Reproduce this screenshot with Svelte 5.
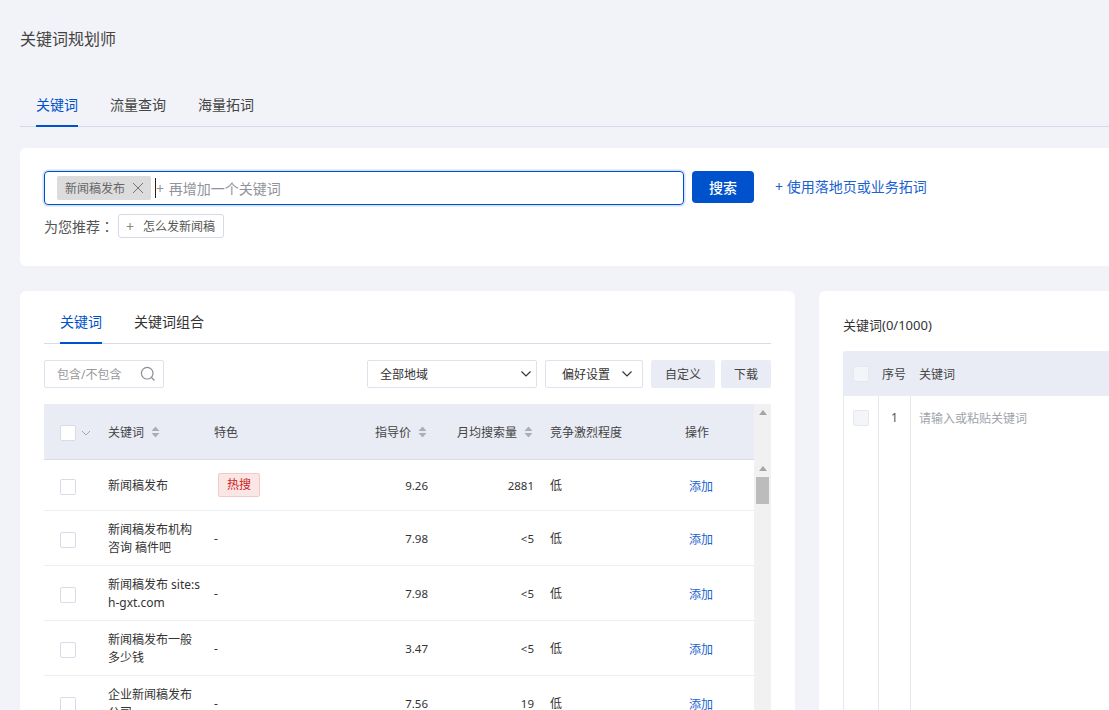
<script>
	const rows = [
		{ kw: '新闻稿发布', hot: true, price: '9.26', vol: '2881', h: 51 },
		{ kw: '新闻稿发布机构咨询 稿件吧', price: '7.98', vol: '<5', h: 55 },
		{ kw: '新闻稿发布 site:sh-gxt.com', price: '7.98', vol: '<5', h: 55 },
		{ kw: '新闻稿发布一般多少钱', price: '3.47', vol: '<5', h: 55 },
		{ kw: '企业新闻稿发布公司', price: '7.56', vol: '19', h: 55 }
	];
</script>

<div class="page">
	<h1 class="title">关键词规划师</h1>

	<nav class="main-tabs">
		<span class="main-tab active">关键词</span>
		<span class="main-tab">流量查询</span>
		<span class="main-tab">海量拓词</span>
	</nav>

	<section class="search-card">
		<div class="search-row">
			<div class="search-input">
				<span class="tag">新闻稿发布
					<svg width="12" height="12" viewBox="0 0 12 12"><path d="M1 1l10 10M11 1L1 11" stroke="#777" fill="none" /></svg>
				</span>
				<span class="caret"></span>
				<span class="placeholder">+ 再增加一个关键词</span>
			</div>
			<button class="search-btn">搜索</button>
			<span class="expand-link">+ 使用落地页或业务拓词</span>
		</div>
		<div class="suggest">
			<span>为您推荐<span class="colon">：</span></span>
			<span class="chip"><span class="chip-plus">+</span>怎么发新闻稿</span>
		</div>
	</section>

	<div class="columns">
		<section class="left-card">
			<div class="sub-tabs">
				<span class="sub-tab active">关键词</span>
				<span class="sub-tab">关键词组合</span>
			</div>

			<div class="toolbar">
				<div class="filter-box">
					<span>包含/不包含</span>
					<svg width="16" height="16" viewBox="0 0 16 16"><circle cx="7.2" cy="7.2" r="5.8" stroke="#8a8f99" stroke-width="1.2" fill="none" /><path d="M11.5 11.5l3 3" stroke="#8a8f99" stroke-width="1.2" /></svg>
				</div>
				<div class="select region">全部地域
					<svg width="12" height="8" viewBox="0 0 12 8"><path d="M1.5 1.5L6 6l4.5-4.5" stroke="#333" stroke-width="1.2" fill="none" /></svg>
				</div>
				<div class="select prefs">偏好设置
					<svg width="12" height="8" viewBox="0 0 12 8"><path d="M1.5 1.5L6 6l4.5-4.5" stroke="#333" stroke-width="1.2" fill="none" /></svg>
				</div>
				<button class="tool-btn custom">自定义</button>
				<button class="tool-btn download">下载</button>
			</div>

			<div class="table">
				<div class="table-main">
					<div class="grid head">
						<div class="check-cell">
							<span class="checkbox"></span>
							<svg width="10" height="6" viewBox="0 0 10 6"><path d="M1 1l4 4 4-4" stroke="#a3a8b3" fill="none" /></svg>
						</div>
						<div class="sortable">关键词 {@render sortIcon()}</div>
						<div>特色</div>
						<div class="num sortable">指导价 {@render sortIcon()}</div>
						<div class="num sortable">月均搜索量 {@render sortIcon()}</div>
						<div></div>
						<div>竞争激烈程度</div>
						<div>操作</div>
					</div>
					{#each rows as row}
						<div class="grid row" style="height: {row.h}px">
							<div class="check-cell"><span class="checkbox"></span></div>
							<div class="kw">{row.kw}</div>
							<div>
								{#if row.hot}<span class="hot">热搜</span>{:else}-{/if}
							</div>
							<div class="num">{row.price}</div>
							<div class="num">{row.vol}</div>
							<div></div>
							<div>低</div>
							<div class="add">添加</div>
						</div>
					{/each}
				</div>
				<div class="scrollbar">
					<div class="scroll-head"><span class="arrow"></span></div>
					<div class="scroll-body">
						<span class="arrow"></span>
						<span class="thumb"></span>
					</div>
				</div>
			</div>
		</section>

		<section class="right-card">
			<div class="right-title">关键词(0/1000)</div>
			<div class="right-head">
				<span class="checkbox muted"></span>
				<span class="seq-label">序号</span>
				<span>关键词</span>
			</div>
			<div class="right-body">
				<div class="rb-check"><span class="checkbox muted"></span></div>
				<div class="rb-seq">1</div>
				<div class="rb-input">请输入或粘贴关键词</div>
			</div>
		</section>
	</div>
</div>

{#snippet sortIcon()}
	<svg class="sort" width="9" height="12" viewBox="0 0 9 12"><path d="M4.5 0.5L8.5 5H0.5zM4.5 11.5L0.5 7h8z" fill="#a9aeb9" /></svg>
{/snippet}

<style>
	:global(body) {
		margin: 0;
		background: #f2f3f8;
	}
	.page {
		width: 1109px;
		height: 710px;
		overflow: hidden;
		box-sizing: border-box;
		padding-left: 20px;
		background: #f2f3f8;
		color: #333;
		font-family: "Noto Sans", "Noto Sans CJK SC", sans-serif;
		font-size: 12px;
	}
	.title {
		margin: 0;
		padding-top: 28px;
		height: 22px;
		line-height: 22px;
		font-size: 16px;
		font-weight: 400;
		color: #444;
	}

	.main-tabs {
		display: flex;
		gap: 32px;
		margin-top: 34px;
		padding-left: 16px;
		height: 43px;
		width: 1200px;
		box-sizing: border-box;
		border-bottom: 1px solid #d5dbe8;
	}
	.main-tab {
		height: 43px;
		box-sizing: border-box;
		padding-top: 11px;
		line-height: 20px;
		font-size: 14px;
		color: #444;
	}
	.main-tab.active {
		color: #0052cc;
		border-bottom: 2px solid #0052cc;
	}

	.search-card {
		margin-top: 21px;
		width: 1200px;
		height: 118px;
		box-sizing: border-box;
		padding: 23px 24px 0;
		background: #fff;
		border-radius: 6px 0 0 6px;
	}
	.search-row {
		display: flex;
		align-items: flex-start;
	}
	.search-input {
		display: flex;
		align-items: center;
		width: 640px;
		height: 34px;
		box-sizing: border-box;
		padding-left: 12px;
		border: 1px solid #0052cc;
		border-radius: 4px;
		box-shadow: 0 0 0 1.5px #cfe0fb;
	}
	.tag {
		display: flex;
		align-items: center;
		justify-content: space-between;
		width: 94px;
		height: 24px;
		box-sizing: border-box;
		padding: 0 7px 1px 8px;
		background: #dcdcdc;
		border-radius: 2px;
		color: #666;
		font-size: 12px;
	}
	.caret {
		width: 1px;
		height: 20px;
		margin-left: 4px;
		background: #222;
	}
	.placeholder {
		padding-bottom: 1px;
		font-size: 14px;
		word-spacing: 1px;
		color: #8f949c;
	}
	.search-btn {
		width: 62px;
		height: 32px;
		margin-left: 8px;
		padding: 0 0 1px;
		border: 0;
		border-radius: 4px;
		background: #0052cc;
		color: #fff;
		font: inherit;
		font-size: 14px;
		font-weight: 500;
	}
	.expand-link {
		margin-left: 21px;
		line-height: 32px;
		font-size: 14px;
		color: #1a62cf;
	}
	.suggest {
		display: flex;
		align-items: center;
		margin-top: 9px;
		font-size: 14px;
		color: #555;
	}
	.colon {
		font-family: "Noto Sans CJK TC", sans-serif;
	}
	.chip {
		display: flex;
		align-items: center;
		width: 106px;
		height: 24px;
		box-sizing: border-box;
		margin-left: 4px;
		padding-left: 7px;
		border: 1px solid #d5d9e6;
		border-radius: 3px;
		font-size: 12px;
		color: #555;
	}
	.chip-plus {
		width: 17px;
		font-size: 14px;
		color: #888;
	}

	.columns {
		display: flex;
		gap: 24px;
		margin-top: 25px;
		width: 1200px;
	}
	.left-card {
		flex: none;
		width: 775px;
		height: 460px;
		box-sizing: border-box;
		padding: 0 24px;
		background: #fff;
		border-radius: 6px;
	}
	.sub-tabs {
		display: flex;
		gap: 32px;
		height: 53px;
		box-sizing: border-box;
		padding-left: 16px;
		border-bottom: 1px solid #d9dce8;
	}
	.sub-tab {
		height: 53px;
		box-sizing: border-box;
		padding-top: 21px;
		line-height: 20px;
		font-size: 14px;
		color: #333;
	}
	.sub-tab.active {
		color: #0052cc;
		border-bottom: 2px solid #0052cc;
	}

	.toolbar {
		display: flex;
		margin-top: 16px;
		height: 28px;
	}
	.filter-box,
	.select {
		display: flex;
		align-items: center;
		justify-content: space-between;
		box-sizing: border-box;
		height: 28px;
		background: #fff;
		border: 1px solid #dfe1ec;
		border-radius: 2px;
	}
	.filter-box {
		width: 120px;
		padding: 0 7px 0 12px;
		color: #999;
	}
	.select.region {
		width: 170px;
		margin-left: 203px;
		padding: 0 4px 0 12px;
	}
	.select.prefs {
		width: 98px;
		margin-left: 8px;
		padding: 0 9px 0 16px;
	}
	.tool-btn {
		height: 28px;
		padding: 0;
		border: 0;
		border-radius: 2px;
		background: #e9ecf4;
		color: #444;
		font: inherit;
	}
	.tool-btn.custom {
		width: 64px;
		margin-left: 8px;
	}
	.tool-btn.download {
		width: 50px;
		margin-left: 6px;
	}

	.table {
		display: flex;
		margin-top: 16px;
		width: 727px;
	}
	.table-main {
		width: 710px;
	}
	.grid {
		display: grid;
		grid-template-columns: 64px 106px 130px 84px 106px 16px 135px 69px;
		align-items: center;
		box-sizing: border-box;
	}
	.head {
		height: 56px;
		padding-top: 1px;
		background: #e9ecf4;
		border-bottom: 1px solid #d9dce8;
		color: #444;
	}
	.row {
		padding-top: 2px;
		border-bottom: 1px solid #eceef5;
		line-height: 18px;
		color: #333;
	}
	.row .num {
		font-size: 11.5px;
	}
	.check-cell {
		display: flex;
		align-items: center;
		gap: 5px;
		padding: 2px 0 0 16px;
	}
	.checkbox {
		flex: none;
		display: block;
		width: 16px;
		height: 16px;
		box-sizing: border-box;
		background: #fff;
		border: 1px solid #d8dbe8;
		border-radius: 2px;
	}
	.checkbox.muted {
		background: #f4f5f9;
		border-color: #e6e8f0;
	}
	.sortable {
		display: flex;
		align-items: center;
		gap: 7px;
	}
	.num {
		text-align: right;
	}
	.num.sortable {
		justify-content: flex-end;
		padding-right: 1px;
	}
	.sort {
		flex: none;
	}
	.kw {
		width: 95px;
		word-break: break-all;
	}
	.hot {
		display: block;
		margin: -2px 0 0 4px;
		width: 42px;
		height: 24px;
		box-sizing: border-box;
		line-height: 22px;
		text-align: center;
		background: #fbe6e6;
		border: 1px solid #f3c9c6;
		border-radius: 2px;
		color: #d0231c;
	}
	.add {
		padding-left: 4px;
		padding-top: 2px;
		color: #1a62cf;
	}

	.scrollbar {
		width: 17px;
		background: #f1f1f1;
		border-radius: 0 2px 0 0;
	}
	.scroll-head {
		height: 56px;
		box-sizing: border-box;
		padding-top: 6px;
	}
	.scroll-body {
		padding-top: 6px;
		height: 300px;
		box-sizing: border-box;
	}
	.arrow {
		display: block;
		width: 0;
		margin: 0 auto;
		border-left: 4px solid transparent;
		border-right: 4px solid transparent;
		border-bottom: 5px solid #a6a6a6;
	}
	.thumb {
		display: block;
		width: 13px;
		height: 27px;
		margin: 6px auto 0;
		background: #bcbcbc;
	}

	.right-card {
		flex: none;
		width: 381px;
		height: 460px;
		box-sizing: border-box;
		padding-left: 24px;
		background: #fff;
		border-radius: 6px;
	}
	.right-title {
		padding-top: 24px;
		height: 36px;
		line-height: 20px;
		font-size: 13px;
		color: #333;
	}
	.right-head {
		display: flex;
		align-items: center;
		height: 45px;
		padding-left: 10px;
		background: #e9ecf4;
		border-radius: 2px 0 0 0;
		color: #444;
	}
	.seq-label {
		margin: 0 13px;
	}
	.right-body {
		display: flex;
		height: 320px;
		border-left: 1px solid #e6e8f0;
	}
	.rb-check {
		width: 35px;
		box-sizing: border-box;
		padding: 14px 0 0 9px;
		border-right: 1px solid #e6e8f0;
	}
	.rb-seq {
		width: 31px;
		padding-top: 13px;
		line-height: 18px;
		text-align: center;
		border-right: 1px solid #e6e8f0;
		color: #555;
	}
	.rb-input {
		padding: 14px 0 0 8px;
		line-height: 18px;
		color: #a0a4ac;
	}
</style>
